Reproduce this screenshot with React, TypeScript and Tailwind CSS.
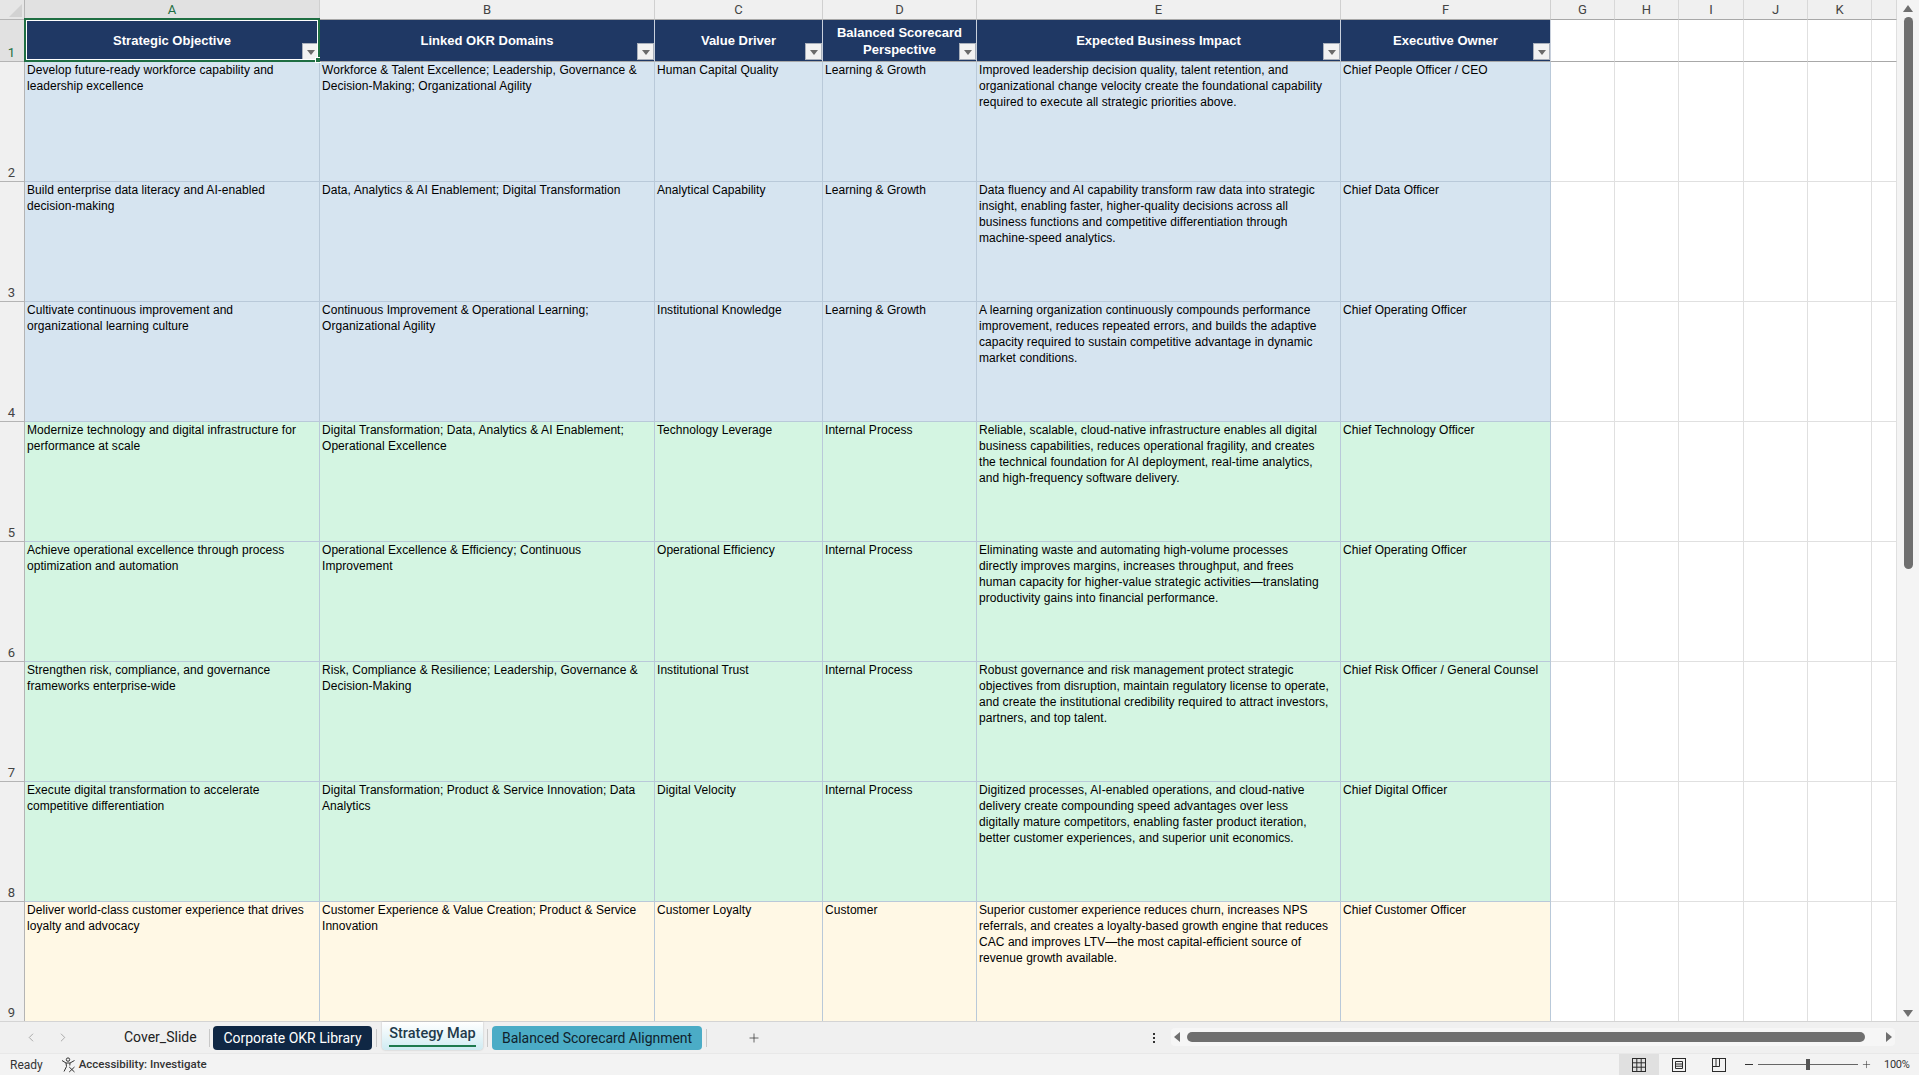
import { ChevronLeft, ChevronRight, Plus } from "lucide-react";

const columns = [
  { key: "A", title: "Strategic Objective" },
  { key: "B", title: "Linked OKR Domains" },
  { key: "C", title: "Value Driver" },
  { key: "D", title: "Balanced Scorecard\nPerspective" },
  { key: "E", title: "Expected Business Impact" },
  { key: "F", title: "Executive Owner" },
];

const blanks = ["G", "H", "I", "J", "K", ""];

const rows = [
  {
    tint: "bg-[#d6e4f0]",
    cells: [
      "Develop future-ready workforce capability and\nleadership excellence",
      "Workforce & Talent Excellence; Leadership, Governance &\nDecision-Making; Organizational Agility",
      "Human Capital Quality",
      "Learning & Growth",
      "Improved leadership decision quality, talent retention, and\norganizational change velocity create the foundational capability\nrequired to execute all strategic priorities above.",
      "Chief People Officer / CEO",
    ],
  },
  {
    tint: "bg-[#d6e4f0]",
    cells: [
      "Build enterprise data literacy and AI-enabled\ndecision-making",
      "Data, Analytics & AI Enablement; Digital Transformation",
      "Analytical Capability",
      "Learning & Growth",
      "Data fluency and AI capability transform raw data into strategic\ninsight, enabling faster, higher-quality decisions across all\nbusiness functions and competitive differentiation through\nmachine-speed analytics.",
      "Chief Data Officer",
    ],
  },
  {
    tint: "bg-[#d6e4f0]",
    cells: [
      "Cultivate continuous improvement and\norganizational learning culture",
      "Continuous Improvement & Operational Learning;\nOrganizational Agility",
      "Institutional Knowledge",
      "Learning & Growth",
      "A learning organization continuously compounds performance\nimprovement, reduces repeated errors, and builds the adaptive\ncapacity required to sustain competitive advantage in dynamic\nmarket conditions.",
      "Chief Operating Officer",
    ],
  },
  {
    tint: "bg-[#d4f5e2]",
    cells: [
      "Modernize technology and digital infrastructure for\nperformance at scale",
      "Digital Transformation; Data, Analytics & AI Enablement;\nOperational Excellence",
      "Technology Leverage",
      "Internal Process",
      "Reliable, scalable, cloud-native infrastructure enables all digital\nbusiness capabilities, reduces operational fragility, and creates\nthe technical foundation for AI deployment, real-time analytics,\nand high-frequency software delivery.",
      "Chief Technology Officer",
    ],
  },
  {
    tint: "bg-[#d4f5e2]",
    cells: [
      "Achieve operational excellence through process\noptimization and automation",
      "Operational Excellence & Efficiency; Continuous\nImprovement",
      "Operational Efficiency",
      "Internal Process",
      "Eliminating waste and automating high-volume processes\ndirectly improves margins, increases throughput, and frees\nhuman capacity for higher-value strategic activities\u2014translating\nproductivity gains into financial performance.",
      "Chief Operating Officer",
    ],
  },
  {
    tint: "bg-[#d4f5e2]",
    cells: [
      "Strengthen risk, compliance, and governance\nframeworks enterprise-wide",
      "Risk, Compliance & Resilience; Leadership, Governance &\nDecision-Making",
      "Institutional Trust",
      "Internal Process",
      "Robust governance and risk management protect strategic\nobjectives from disruption, maintain regulatory license to operate,\nand create the institutional credibility required to attract investors,\npartners, and top talent.",
      "Chief Risk Officer / General Counsel",
    ],
  },
  {
    tint: "bg-[#d4f5e2]",
    cells: [
      "Execute digital transformation to accelerate\ncompetitive differentiation",
      "Digital Transformation; Product & Service Innovation; Data\nAnalytics",
      "Digital Velocity",
      "Internal Process",
      "Digitized processes, AI-enabled operations, and cloud-native\ndelivery create compounding speed advantages over less\ndigitally mature competitors, enabling faster product iteration,\nbetter customer experiences, and superior unit economics.",
      "Chief Digital Officer",
    ],
  },
  {
    tint: "bg-[#fff8e5]",
    cells: [
      "Deliver world-class customer experience that drives\nloyalty and advocacy",
      "Customer Experience & Value Creation; Product & Service\nInnovation",
      "Customer Loyalty",
      "Customer",
      "Superior customer experience reduces churn, increases NPS\nreferrals, and creates a loyalty-based growth engine that reduces\nCAC and improves LTV\u2014the most capital-efficient source of\nrevenue growth available.",
      "Chief Customer Officer",
    ],
  },
];

function FilterButton() {
  return (
    <div className="absolute right-0 bottom-[1px] flex h-[17px] w-[17px] items-center justify-center border border-[#a9b0bb] bg-[#f2f2f2]">
      <div className="mt-[1px] h-0 w-0 border-x-[4px] border-t-[5px] border-x-transparent border-t-[#6b6b6b]" />
    </div>
  );
}

function RowNumber({ n, active }: { n: number; active?: boolean }) {
  return (
    <div
      className={`flex items-end justify-center border-r border-b border-[#b4b4b4] pr-[1px] text-[13px] leading-[16px] ${
        active ? "bg-[#e1e1e1] text-[#1e6e42]" : "bg-[#f0f0f0] text-[#444444]"
      }`}
    >
      {n}
    </div>
  );
}

function AccessibilityIcon() {
  return (
    <svg width="15" height="16" viewBox="0 0 15 16" fill="none" stroke="#333333" strokeWidth="1">
      <circle cx="7" cy="2.6" r="1.7" />
      <path d="M1 3.5 L5 6 L9 6 L13.5 3.5" />
      <path d="M5 6 L5.5 9.5 L3 14.5" />
      <path d="M9 6 L8.8 8.5" />
      <path d="M8.2 10 L13.5 15 M13.5 10 L8.2 15" />
    </svg>
  );
}

function GridIcon() {
  return (
    <svg width="14" height="14" viewBox="0 0 14 14" fill="none" stroke="#2b2b2b" strokeWidth="1">
      <rect x="0.5" y="0.5" width="13" height="13" />
      <path d="M0.5 4.8H13.5M0.5 9.2H13.5M4.8 0.5V13.5M9.2 0.5V13.5" />
    </svg>
  );
}

function PageIcon() {
  return (
    <svg width="14" height="14" viewBox="0 0 14 14" fill="none" stroke="#2b2b2b" strokeWidth="1">
      <rect x="0.5" y="0.5" width="13" height="13" />
      <path d="M3.5 3.5H10.5V10.5H3.5ZM3.5 6H10.5M3.5 8.2H10.5" />
    </svg>
  );
}

function BreakIcon() {
  return (
    <svg width="14" height="14" viewBox="0 0 14 14" fill="none" stroke="#2b2b2b" strokeWidth="1">
      <rect x="0.5" y="0.5" width="13" height="13" />
      <path d="M0.5 8.5H7.5V0.5M4 0.5V8.5" />
    </svg>
  );
}

export default function App() {
  return (
    <div className="flex h-screen w-full flex-col overflow-hidden bg-white font-['Roboto',sans-serif]">
      {/* sheet + vertical scrollbar */}
      <div className="flex min-h-0 flex-1">
        <div className="min-w-0 flex-1 overflow-hidden">
          <div className="grid grid-cols-[25px_295px_335px_168px_154px_364px_210px_64px_64px_65px_64px_64px_25px] grid-rows-[20px_42px_repeat(8,120px)]">
            {/* column letters */}
            <div className="relative border-r border-b border-[#b4b4b4] bg-[#e6e6e6]">
              <div className="absolute right-[2px] bottom-[2px] h-0 w-0 border-b-[13px] border-l-[13px] border-b-[#d2d2d2] border-l-transparent" />
            </div>
            {columns.map((c, i) => (
              <div
                key={c.key}
                className={`flex items-center justify-center border-r border-b border-r-[#d0d0d0] border-b-[#a8a8a8] text-[13px] leading-none ${
                  i === 0 ? "bg-[#e1e1e1] text-[#1e6e42]" : "bg-[#f0f0f0] text-[#444444]"
                }`}
              >
                {c.key}
              </div>
            ))}
            {blanks.map((b, i) => (
              <div
                key={i}
                className="flex items-center justify-center border-r border-b border-r-[#d8d8d8] border-b-[#a8a8a8] bg-[#f0f0f0] text-[13px] leading-none text-[#444444]"
              >
                {b}
              </div>
            ))}

            {/* header row */}
            <RowNumber n={1} active />
            {columns.map((c, i) => (
              <div
                key={c.key}
                className="relative flex items-center justify-center border-r border-b border-r-[#c8d0dc] border-b-[#a8a8a8] bg-[#1f3864] px-[3px] text-center font-['Liberation_Sans',Arial,sans-serif] text-[13px] leading-[17px] font-bold whitespace-pre text-white"
              >
                {c.title}
                <FilterButton />
                {i === 0 && (
                  <div className="absolute -top-[2px] -left-[1px] h-[44px] w-[296px] border-2 border-[#1e6e42]">
                    <div className="h-full w-full border border-white" />
                    <div className="absolute -right-[3px] -bottom-[3px] h-[6px] w-[6px] border border-white bg-[#1e6e42]" />
                  </div>
                )}
              </div>
            ))}
            {blanks.map((_, i) => (
              <div key={i} className="border-r border-b border-r-[#e0e0e0] border-b-[#a8a8a8] bg-white" />
            ))}

            {/* data rows */}
            {rows.map((row, r) => (
              <div key={r} className="contents">
                <RowNumber n={r + 2} />
                {row.cells.map((text, i) => (
                  <div
                    key={i}
                    className={`border-r border-b border-[#b9c9d9] pr-[3px] pl-[2px] font-['Liberation_Sans',Arial,sans-serif] text-[12px] leading-[16px] tracking-[0.055px] whitespace-pre text-black ${row.tint}`}
                  >
                    {text}
                  </div>
                ))}
                {blanks.map((_, i) => (
                  <div key={i} className="border-r border-b border-[#e0e0e0] bg-white" />
                ))}
              </div>
            ))}
          </div>
        </div>

        <div className="flex w-[22px] shrink-0 flex-col items-center bg-[#f4f4f4] pt-[5px] pb-[4px]">
          <div className="h-0 w-0 border-x-[5px] border-b-[7px] border-x-transparent border-b-[#6f6f6f]" />
          <div className="mt-[5px] h-[552px] w-[9px] rounded-[5px] bg-[#6f6f6f]" />
          <div className="mt-auto h-0 w-0 border-x-[5px] border-t-[7px] border-x-transparent border-t-[#6f6f6f]" />
        </div>
      </div>

      {/* sheet tabs + horizontal scrollbar */}
      <div className="flex h-[32px] shrink-0 items-center border-t border-[#d4d4d4] bg-[#f0f0f0] text-[14px] leading-none">
        <div className="ml-[24px] flex w-[14px] justify-center text-[#8f8f8f]">
          <ChevronLeft size={17} strokeWidth={1.25} />
        </div>
        <div className="ml-[18px] flex w-[14px] justify-center text-[#8f8f8f]">
          <ChevronRight size={17} strokeWidth={1.25} />
        </div>
        <div className="mb-[1px] ml-[54px] w-[71px] whitespace-nowrap text-[#222222]">Cover_Slide</div>
        <div className="ml-[14px] h-[18px] w-px bg-[#c8c8c8]" />
        <div className="ml-[3px] flex h-[24px] w-[159px] items-center justify-center rounded-[4px] bg-[#0f2744] whitespace-nowrap text-white">
          Corporate OKR Library
        </div>
        <div className="ml-[4px] h-[18px] w-px bg-[#c8c8c8]" />
        <div className="relative mb-[4px] ml-[5px] flex h-[28px] w-[101px] items-center justify-center rounded-b-[4px] bg-gradient-to-b from-white to-[#cfebf2] pb-[3px] text-[14.5px] font-medium whitespace-nowrap text-[#1f3a4a] shadow-[0_0_2px_rgba(0,0,0,0.25)]">
          Strategy Map
          <div className="absolute right-[7px] bottom-[3px] left-[7px] h-[2px] bg-[#1e7a4e]" />
        </div>
        <div className="ml-[4px] h-[18px] w-px bg-[#c8c8c8]" />
        <div className="ml-[4px] flex h-[24px] w-[210px] items-center justify-center rounded-[4px] bg-[#4bacc6] tracking-[-0.05px] whitespace-nowrap text-[#10222c]">
          Balanced Scorecard Alignment
        </div>
        <div className="ml-[4px] h-[18px] w-px bg-[#c8c8c8]" />
        <Plus size={14} strokeWidth={1.25} className="ml-[40px] text-[#333333]" />
        <div className="ml-auto flex flex-col gap-[2px]">
          <div className="h-[2px] w-[2px] bg-[#333333]" />
          <div className="h-[2px] w-[2px] bg-[#333333]" />
          <div className="h-[2px] w-[2px] bg-[#333333]" />
        </div>
        <div className="mr-[24px] mb-[2px] ml-[16px] flex h-[18px] w-[724px] items-center rounded-[4px] bg-[#f6f6f6] px-[3px]">
          <div className="h-0 w-0 border-y-[5px] border-r-[6px] border-y-transparent border-r-[#6f6f6f]" />
          <div className="ml-[7px] h-[10px] w-[678px] rounded-[5px] bg-[#6f6f6f]" />
          <div className="ml-auto h-0 w-0 border-y-[5px] border-l-[6px] border-y-transparent border-l-[#6f6f6f]" />
        </div>
      </div>

      {/* status bar */}
      <div className="flex h-[22px] shrink-0 items-center border-t border-[#e8e8e8] bg-[#f3f3f3] text-[12px] leading-none text-[#333333]">
        <span className="ml-[10px]">Ready</span>
        <span className="ml-[18px]">
          <AccessibilityIcon />
        </span>
        <span className="ml-[3px] text-[11.5px] font-medium whitespace-nowrap">Accessibility: Investigate</span>
        <div className="ml-auto flex h-full w-[40px] items-center justify-center bg-[#e0e0e0]">
          <GridIcon />
        </div>
        <div className="flex h-full w-[40px] items-center justify-center">
          <PageIcon />
        </div>
        <div className="flex h-full w-[40px] items-center justify-center">
          <BreakIcon />
        </div>
        <div className="ml-[6px] h-[1.5px] w-[8px] bg-[#333333]" />
        <div className="relative ml-[5px] h-px w-[100px] bg-[#666666]">
          <div className="absolute top-[-5px] left-[48px] h-[11px] w-[4px] bg-[#555555]" />
        </div>
        <Plus size={11} strokeWidth={1.25} className="ml-[3px] text-[#333333]" />
        <span className="ml-[12px] w-[35px] text-[11px] tracking-[-0.3px]">100%</span>
      </div>
    </div>
  );
}
